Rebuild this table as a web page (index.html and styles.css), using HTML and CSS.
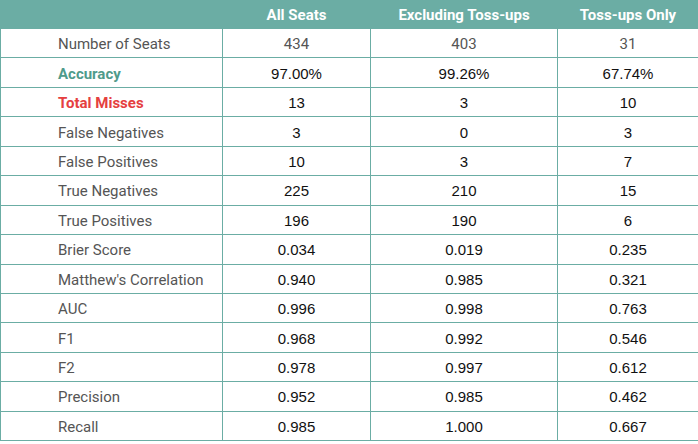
FILE: index.html
```html
<!DOCTYPE html>
<html>
<head>
<meta charset="utf-8">
<link rel="stylesheet" href="styles.css">
</head>
<body>
<table class="metrics">
  <colgroup>
    <col class="c-label">
    <col class="c-all">
    <col class="c-excl">
    <col class="c-only">
  </colgroup>
  <thead>
    <tr>
      <th></th>
      <th>All Seats</th>
      <th>Excluding Toss-ups</th>
      <th>Toss-ups Only</th>
    </tr>
  </thead>
  <tbody>
    <tr class="gray"><td class="label">Number of Seats</td><td>434</td><td>403</td><td>31</td></tr>
    <tr><td class="label accent">Accuracy</td><td>97.00%</td><td>99.26%</td><td>67.74%</td></tr>
    <tr><td class="label miss">Total Misses</td><td>13</td><td>3</td><td>10</td></tr>
    <tr><td class="label">False Negatives</td><td>3</td><td>0</td><td>3</td></tr>
    <tr><td class="label">False Positives</td><td>10</td><td>3</td><td>7</td></tr>
    <tr><td class="label">True Negatives</td><td>225</td><td>210</td><td>15</td></tr>
    <tr><td class="label">True Positives</td><td>196</td><td>190</td><td>6</td></tr>
    <tr><td class="label">Brier Score</td><td>0.034</td><td>0.019</td><td>0.235</td></tr>
    <tr><td class="label">Matthew's Correlation</td><td>0.940</td><td>0.985</td><td>0.321</td></tr>
    <tr><td class="label">AUC</td><td>0.996</td><td>0.998</td><td>0.763</td></tr>
    <tr><td class="label">F1</td><td>0.968</td><td>0.992</td><td>0.546</td></tr>
    <tr><td class="label">F2</td><td>0.978</td><td>0.997</td><td>0.612</td></tr>
    <tr><td class="label">Precision</td><td>0.952</td><td>0.985</td><td>0.462</td></tr>
    <tr><td class="label">Recall</td><td>0.985</td><td>1.000</td><td>0.667</td></tr>
  </tbody>
</table>
</body>
</html>
```
FILE: styles.css
```css
html, body {
  margin: 0;
  padding: 0;
  background: #ffffff;
}
.metrics {
  border-collapse: collapse;
  width: 698px;
  table-layout: fixed;
  font-family: Roboto, "Liberation Sans", sans-serif;
  font-size: 15px;
}
.c-label { width: 222px; }
.c-all { width: 148px; }
.c-excl { width: 187px; }
.c-only { width: 141px; }
.metrics th {
  background: #6bada4;
  color: #ffffff;
  font-weight: 700;
  height: 27px;
  padding: 0;
  border: 1px solid #6bada4;
  text-align: center;
  vertical-align: middle;
  line-height: 16px;
}
.metrics td {
  border: 1px solid #6bada4;
  height: 26.45px;
  padding: 2px 0 0 0;
  text-align: center;
  vertical-align: middle;
  color: #111111;
  font-family: "Liberation Sans", Arial, sans-serif;
  line-height: 16px;
}
.metrics td.label {
  text-align: left;
  padding-left: 57px;
  font-family: Roboto, sans-serif;
  color: #555555;
}
.metrics tr.gray td {
  font-family: Roboto, sans-serif;
  color: #555555;
}
.metrics td.accent {
  color: #4f9b8b;
  font-weight: 700;
}
.metrics td.miss {
  color: #e5403f;
  font-weight: 700;
}
```
